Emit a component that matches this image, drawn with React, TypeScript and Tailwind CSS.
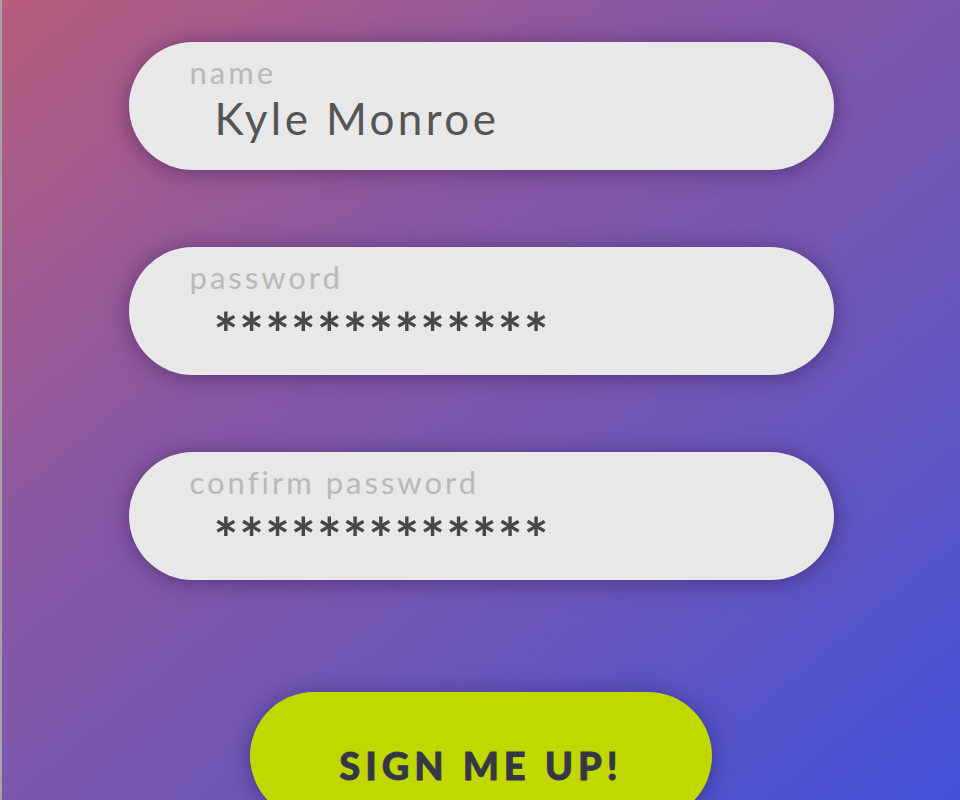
import React from "react";

// --- DATA ---
const fields = [
  { label: "name", value: "Kyle Monroe", secret: false },
  { label: "password", value: "*************", secret: true },
  { label: "confirm password", value: "*************", secret: true },
];

const Field = ({ label, value, secret }: { label: string; value: string; secret: boolean }) => (
  <div className="w-[705px] h-[128px] shrink-0 rounded-full bg-[#e8e8e8] shadow-[0_2px_22px_rgba(45,15,70,0.5)] pl-[61px] pt-[12px] flex flex-col">
    <span className="text-[31px] leading-[37px] tracking-[3px] text-[#b9b9b9]">{label}</span>
    {secret ? (
      <span className="pl-[24px] mt-[8px] h-[40px] text-[58px] leading-[58px] font-bold tracking-[1.2px] text-[#474747]">{value}</span>
    ) : (
      <span className="pl-[25px] mt-[1px] text-[44px] leading-[52px] tracking-[3.4px] text-[#555555]">{value}</span>
    )}
  </div>
);

export default function App() {
  return (
    <div
      className="w-[960px] h-[800px] overflow-hidden border-l-2 border-[#a3a3a3] bg-[linear-gradient(140deg,#b85e7d_0%,#8a58a4_35%,#6c57b8_65%,#4352da_100%)] flex flex-col items-center pt-[42px] gap-[77px]"
      style={{ fontFamily: "Lato, 'Open Sans', sans-serif" }}
    >
      {fields.map((f) => (
        <Field key={f.label} {...f} />
      ))}

      {/* --- SUBMIT --- */}
      <button className="mt-[35px] w-[462px] h-[128px] shrink-0 rounded-full bg-[#c1d800] shadow-[0_2px_22px_rgba(30,20,90,0.5)] flex justify-center pt-[53px]">
        <span className="text-[38px] leading-[40px] font-black tracking-[5px] text-[#343846] [-webkit-text-stroke:0.8px_#343846]">SIGN ME UP!</span>
      </button>
    </div>
  );
}
